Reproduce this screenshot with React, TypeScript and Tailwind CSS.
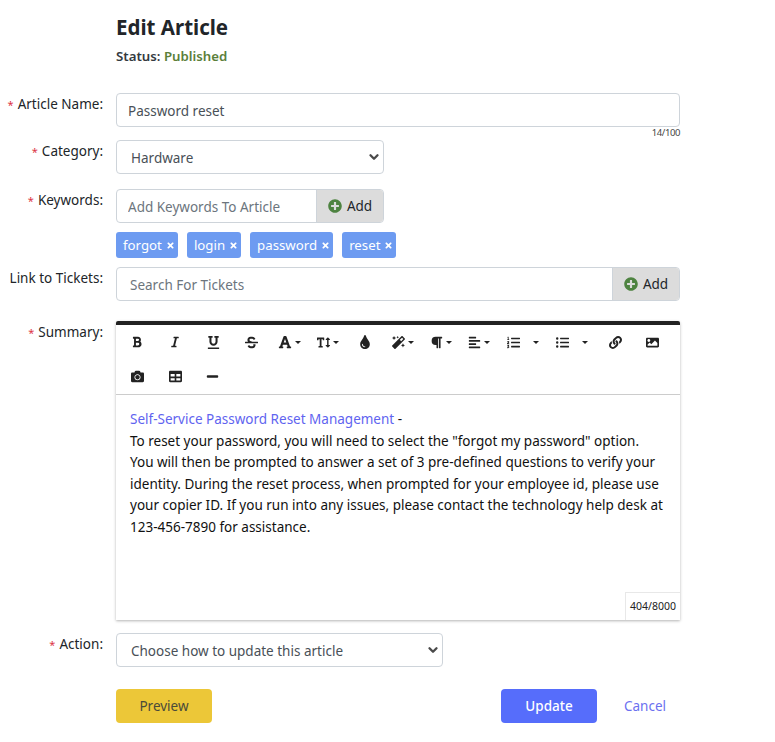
import { ReactNode } from 'react'
import { IconType } from 'react-icons'
import {
  FaAlignLeft, FaBold, FaCamera, FaFont, FaImage, FaItalic, FaLink, FaListOl, FaListUl, FaMagic, FaMinus,
  FaParagraph, FaPlusCircle, FaStrikethrough, FaTable, FaTextHeight, FaTimes, FaTint, FaUnderline,
} from 'react-icons/fa'
import { FiChevronDown } from 'react-icons/fi'

const TOOLS: { icon: IconType; w: string; size: number; caret?: boolean; gap?: string }[] = [
  { icon: FaBold, w: 'w-[38px]', size: 12 },
  { icon: FaItalic, w: 'w-[38px]', size: 12 },
  { icon: FaUnderline, w: 'w-[38px]', size: 13 },
  { icon: FaStrikethrough, w: 'w-[38px]', size: 13 },
  { icon: FaFont, w: 'w-[39px]', size: 14, caret: true },
  { icon: FaTextHeight, w: 'w-[38px]', size: 13, caret: true },
  { icon: FaTint, w: 'w-[36px]', size: 14 },
  { icon: FaMagic, w: 'w-[39px]', size: 13, caret: true },
  { icon: FaParagraph, w: 'w-[38px]', size: 13, caret: true },
  { icon: FaAlignLeft, w: 'w-[38px]', size: 13, caret: true },
  { icon: FaListOl, w: 'w-[49px]', size: 13, caret: true, gap: 'gap-[13px]' },
  { icon: FaListUl, w: 'w-[49px]', size: 13, caret: true, gap: 'gap-[13px]' },
  { icon: FaLink, w: 'w-[38px]', size: 13 },
  { icon: FaImage, w: 'w-[36px]', size: 13 },
  { icon: FaCamera, w: 'w-[38px]', size: 13 },
  { icon: FaTable, w: 'w-[38px]', size: 13 },
  { icon: FaMinus, w: 'w-[36px]', size: 13 },
]

function Row({ label, req, children, className = '' }: { label: string; req?: boolean; children: ReactNode; className?: string }) {
  return (
    <div className={`flex gap-[13px] ${className}`}>
      <label className="w-[103px] shrink-0 text-right text-[13.5px] leading-[20px] pt-[1px] text-[#212529] whitespace-nowrap">
        {req && <span className="text-[11px] text-[#dc3545] mr-[4px]">*</span>}
        {label}:
      </label>
      {children}
    </div>
  )
}

function AddGroup({ placeholder, className, pad }: { placeholder: string; className: string; pad: string }) {
  return (
    <div className={`flex h-[34px] border border-[#ced4da] rounded-[4px] overflow-hidden ${className}`}>
      <input placeholder={placeholder} className={`flex-1 min-w-0 text-[13.5px] outline-none placeholder:text-[#6c757d] ${pad}`} />
      <button className="w-[67px] shrink-0 flex items-center justify-center gap-[5px] bg-[#dcdcdc] border-l border-[#ced4da] text-[13.5px] text-[#212529]">
        <FaPlusCircle size={14} className="text-[#4e8341]" />
        Add
      </button>
    </div>
  )
}

function Select({ value, className }: { value: string; className: string }) {
  return (
    <div className={`relative h-[34px] ${className}`}>
      <select defaultValue={value} className="appearance-none w-full h-full pl-[14px] pt-[2px] border border-[#ced4da] rounded-[4px] bg-white text-[13.5px] text-[#495057] outline-none">
        <option>{value}</option>
      </select>
      <FiChevronDown size={14} strokeWidth={4} className="absolute right-[3px] top-[10px] text-[#4a4a4a] pointer-events-none" />
    </div>
  )
}

export default function App() {
  return (
    <div className="w-[775px] h-[742px] overflow-hidden bg-white pt-[12px] font-['Noto_Sans','Open_Sans',sans-serif] text-[#212529]">
      <div className="ml-[116px]">
        <h1 className="text-[20.5px] leading-[30px] font-bold text-[#212529]">Edit Article</h1>
        <p className="mt-[4px] text-[13.25px] leading-[20px] font-semibold text-[#343a40]">
          Status: <span className="text-[#5b7f3a]">Published</span>
        </p>
      </div>

      <Row label="Article Name" req className="mt-[27px]">
        <div className="w-[564px]">
          <input defaultValue="Password reset" className="w-full h-[34px] px-[11px] pt-[1px] border border-[#ced4da] rounded-[4px] text-[13.5px] text-[#495057] outline-none" />
          <div className="text-right text-[9.5px] tracking-[-0.4px] leading-[12px] text-[#444]">14/100</div>
        </div>
      </Row>

      <Row label="Category" req className="mt-[1px]">
        <Select value="Hardware" className="w-[268px]" />
      </Row>

      <Row label="Keywords" req className="mt-[15px]">
        <div>
          <AddGroup placeholder="Add Keywords To Article" className="w-[268px]" pad="pl-[11px] pt-[2px]" />
          <div className="flex gap-[9px] mt-[9px]">
            {['forgot', 'login', 'password', 'reset'].map(k => (
              <span key={k} className="flex items-center gap-[4px] h-[26px] pl-[7px] pr-[3px] pt-[1px] rounded-[3px] bg-[#6d9bf1] text-white text-[13.25px]">
                {k}
                <FaTimes size={9} />
              </span>
            ))}
          </div>
        </div>
      </Row>

      <Row label="Link to Tickets" className="mt-[9px]">
        <AddGroup placeholder="Search For Tickets" className="w-[564px]" pad="pl-[13px] pt-[3px]" />
      </Row>

      <Row label="Summary" req className="mt-[20px]">
        <div className="relative w-[564px] h-[299px] border-t-[4px] border-[#222] rounded-t-[2px] shadow-[0_1px_3px_rgba(0,0,0,0.3)]">
          <div className="h-[70px] pl-[2px] flex flex-wrap content-start border-b border-[#ccc]">
            {TOOLS.map((t, i) => {
              const Icon = t.icon
              return (
                <div key={i} className={`${t.w} h-[34px] flex items-center justify-center ${t.gap ?? 'gap-[3px]'} text-[#222]`}>
                  <Icon size={t.size} />
                  {t.caret && <span className="border-x-[3px] border-x-transparent border-t-[3px] border-t-[#222]" />}
                </div>
              )
            })}
          </div>
          <div className="px-[14px] pt-[14px] text-[13.5px] leading-[21.6px] text-[#111] whitespace-nowrap">
            <a className="text-[#5f64f0]">Self-Service Password Reset Management</a> -
            <br />
            To reset your password, you will need to select the "forgot my password" option.
            <br />
            You will then be prompted to answer a set of 3 pre-defined questions to verify your
            <br />
            identity. During the reset process, when prompted for your employee id, please use
            <br />
            your copier ID. If you run into any issues, please contact the technology help desk at
            <br />
            123-456-7890 for assistance.
          </div>
          <div className="absolute right-0 bottom-0 w-[55px] h-[28px] flex items-center justify-center border-l border-t border-[#e8e8e8] bg-white text-[10.5px] text-[#222]">
            404/8000
          </div>
        </div>
      </Row>

      <Row label="Action" req className="mt-[13px]">
        <Select value="Choose how to update this article" className="w-[327px]" />
      </Row>

      <div className="flex items-center ml-[116px] mt-[22px] w-[564px]">
        <button className="w-[96px] h-[34px] rounded-[4px] bg-[#ecc738] text-[13.5px] text-[#4a4a3a]">Preview</button>
        <button className="ml-auto w-[96px] h-[34px] rounded-[4px] bg-[#566dfb] text-[13.5px] font-medium text-white">Update</button>
        <a className="w-[83px] pr-[14px] text-right text-[13.5px] text-[#6b70f0]">Cancel</a>
      </div>
    </div>
  )
}
